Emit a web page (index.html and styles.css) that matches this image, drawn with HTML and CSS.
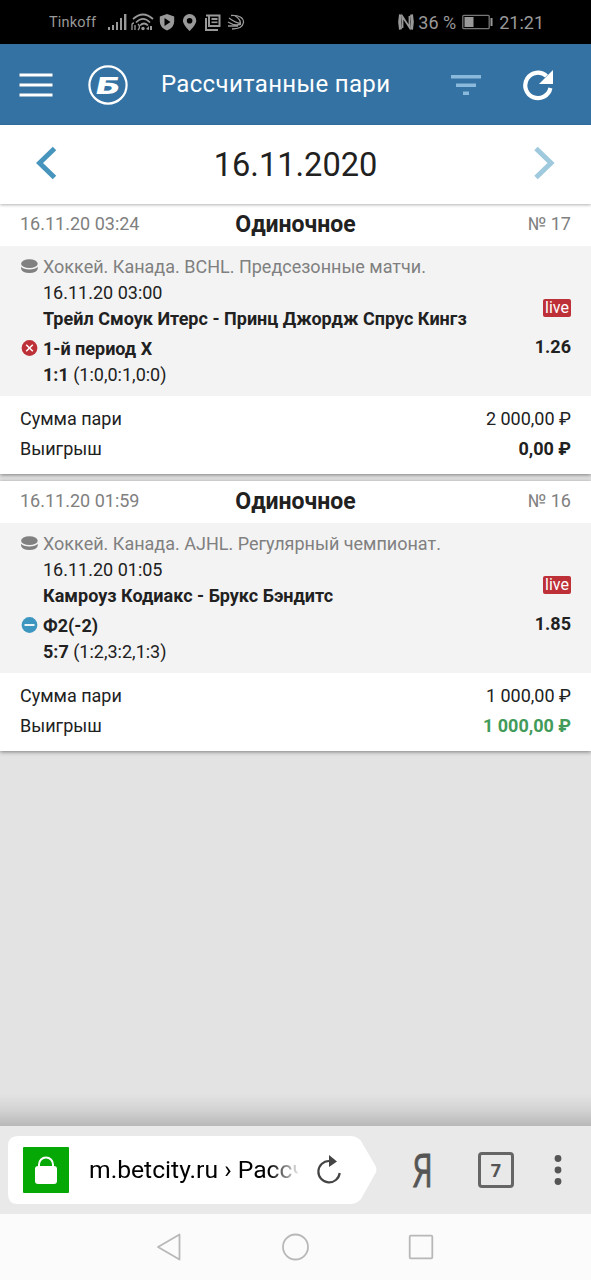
FILE: index.html
```html
<!DOCTYPE html>
<html lang="ru">
<head>
<meta charset="utf-8">
<title>Рассчитанные пари</title>
<link rel="stylesheet" href="styles.css">
</head>
<body>
<div class="screen">
  <div class="status">
    <span class="carrier">Tinkoff</span>
    <svg class="status-icons" width="140" height="22" viewBox="0 0 140 22" fill="#999">
      <path d="M0 16h2v3H0zM4 14h2v5H4zM8 11h2v8H8zM12 7h2v12h-2zM16 3h2.400v16H16z"/>
      <g fill="none" stroke="#999" stroke-width="1.700">
        <path d="M25 8Q35 -1 45 8M28 11.500Q35 4.500 42 11.500M32 14.500Q36 10.500 40 14.500"/>
        <path d="M24 19v-5q0-2 2-2M27 14v5M30 13q3 3 0 6" stroke-width="1.300"/>
      </g>
      <circle cx="35" cy="17.500" r="1.700"/><path d="M38 18l3-3v4zM42 15h2v4h-2z"/>
      <path fill-rule="evenodd" d="M59 3l7.200 2.500v5q0 6-7.200 9-7.200-3-7.200-9v-5zM56.500 7v8l6-4z"/>
      <path fill-rule="evenodd" d="M81.600 3a6.700 6.700 0 0 1 6.700 6.700c0 4-6.700 10.300-6.700 10.300s-6.700-6.300-6.700-10.300A6.700 6.700 0 0 1 81.600 3zm0 4a2.800 2.800 0 1 0 0 5.600 2.800 2.800 0 0 0 0-5.600z"/>
      <g fill="none" stroke="#999" stroke-width="2">
        <path d="M98 7v12h12M98 4.500h13.500v10.500H101V4.500M103.500 8h6" />
        <path d="M103.500 11.300h6" stroke-width="1.600"/>
      </g>
      <g fill="none" stroke="#999" stroke-width="1.300">
        <path d="M123 4.500Q135.500 4 135.500 11.500 134.500 18 124 18M127 5q6 3 5.500 9M121 7q7 5 11 5.500M120 11q6 4 12 2.500M120 15h10"/>
      </g>
    </svg>
    <div class="status-right">
      <svg width="18" height="18" viewBox="0 0 18 18"><path d="M3.500 1.500Q1.800 9 3.500 16.500M14.500 1.500Q16.200 9 14.500 16.500" fill="none" stroke="#999" stroke-width="3"/><path d="M5.500 15V3.500L12.500 14.500V3" fill="none" stroke="#999" stroke-width="1.800"/></svg>
      <span class="percent">36 %</span>
      <svg class="battery" width="32" height="16" viewBox="0 0 32 16"><rect x="1.800" y="1.300" width="26.400" height="13.400" rx="1" fill="none" stroke="#777" stroke-width="1.300"/><path d="M3.500 3h9v10h-9zM29.500 4h2v8h-2z" fill="#999"/></svg>
      <span class="clock">21:21</span>
    </div>
  </div>

  <div class="appbar">
    <svg class="menu" width="34" height="26" viewBox="0 0 34 26"><path d="M.5 3h33M.5 13h33M.5 23h33" stroke="#fff" stroke-width="3"/></svg>
    <svg class="logo" width="40" height="40" viewBox="0 0 40 40"><circle cx="20" cy="20" r="18.600" fill="none" stroke="#fff" stroke-width="2.200"/><text class="logo-letter" transform="translate(6.500 28.600) skewX(-12) scale(1.560 1)" fill="#fff">Б</text></svg>
    <h1 class="title">Рассчитанные пари</h1>
    <svg class="filter" width="30" height="22" viewBox="0 0 30 22" fill="#8ab9dc"><path d="M0 1h30v3.500H0zM5 9.500h20V13H5zM12 17.500h6V21h-6z"/></svg>
    <svg class="refresh" width="32" height="32" viewBox="0 0 32 32"><path d="M24.500 7A12.700 12.700 0 1 0 28.400 19" fill="none" stroke="#fff" stroke-width="4.200"/><path d="M31 1v14H17z" fill="#fff"/></svg>
  </div>

  <div class="datebar">
    <svg width="22" height="34" viewBox="0 0 22 34"><path d="M18.500 2.500L3.500 17l15 14.500" fill="none" stroke="#4795bc" stroke-width="5"/></svg>
    <span class="date">16.11.2020</span>
    <svg width="22" height="34" viewBox="0 0 22 34"><path d="M3 2.500L18 17 3 31.500" fill="none" stroke="#9fc9dd" stroke-width="5"/></svg>
  </div>

  <div class="bets">
    <section class="card">
      <div class="card-head"><span>16.11.20 03:24</span><b class="kind">Одиночное</b><span class="number">№ 17</span></div>
      <div class="event">
        <div class="row muted"><svg class="mark" width="18" height="18" viewBox="0 0 18 18" fill="#808080"><ellipse cx="9.400" cy="6.700" rx="8.300" ry="4.400"/><path d="M1.100 9.800Q3.400 12.400 9.400 12.400T17.700 9.800v2.200Q16.400 16 9.400 16T1.100 12z"/></svg><span class="league">Хоккей. Канада. BCHL. Предсезонные матчи.</span></div>
        <div class="row indent">16.11.20 03:00</div>
        <div class="row indent teams"><b>Трейл Смоук Итерс - Принц Джордж Спрус Кингз</b><span class="live">live</span></div>
        <div class="row outcome"><svg class="mark" width="18" height="18" viewBox="0 0 18 18"><circle cx="9.500" cy="9" r="7.900" fill="#be3038"/><path d="M6.200 5.700l6.600 6.600M12.800 5.700l-6.600 6.600" stroke="#fff" stroke-width="1.500"/></svg><b>1-й период X</b><b class="odds">1.26</b></div>
        <div class="row indent score"><b>1:1</b> (1:0,0:1,0:0)</div>
      </div>
      <div class="sums">
        <div class="sum"><span>Сумма пари</span><span class="money">2 000,00 ₽</span></div>
        <div class="sum"><span>Выигрыш</span><b class="money">0,00 ₽</b></div>
      </div>
    </section>
    <section class="card">
      <div class="card-head"><span>16.11.20 01:59</span><b class="kind">Одиночное</b><span class="number">№ 16</span></div>
      <div class="event">
        <div class="row muted"><svg class="mark" width="18" height="18" viewBox="0 0 18 18" fill="#808080"><ellipse cx="9.400" cy="6.700" rx="8.300" ry="4.400"/><path d="M1.100 9.800Q3.400 12.400 9.400 12.400T17.700 9.800v2.200Q16.400 16 9.400 16T1.100 12z"/></svg><span class="league">Хоккей. Канада. AJHL. Регулярный чемпионат.</span></div>
        <div class="row indent">16.11.20 01:05</div>
        <div class="row indent teams"><b>Камроуз Кодиакс - Брукс Бэндитс</b><span class="live">live</span></div>
        <div class="row outcome"><svg class="mark" width="18" height="18" viewBox="0 0 18 18"><circle cx="9.500" cy="9" r="7.900" fill="#3d96c0"/><path d="M4.500 9h10" stroke="#fff" stroke-width="1.800"/></svg><b>Ф2(-2)</b><b class="odds">1.85</b></div>
        <div class="row indent score"><b>5:7</b> (1:2,3:2,1:3)</div>
      </div>
      <div class="sums">
        <div class="sum"><span>Сумма пари</span><span class="money">1 000,00 ₽</span></div>
        <div class="sum"><span>Выигрыш</span><b class="money win">1 000,00 ₽</b></div>
      </div>
    </section>
  </div>

  <div class="shade"></div>
  <div class="browser">
    <div class="address">
      <svg class="address-shape" width="371" height="72" viewBox="0 0 371 72"><path d="M10 2H342Q349 2 353 7L367 31Q370 35.500 367 40L353 65Q349 70 342 70H10Q0 70 0 60V12Q0 2 10 2Z" fill="#fff"/></svg>
      <span class="lock"><svg width="22" height="28" viewBox="0 0 22 28"><rect y="10" width="22" height="18" rx="3" fill="#fff"/><path d="M4 11V8.500a7 7 0 0 1 14 0V11" fill="none" stroke="#fff" stroke-width="2"/></svg></span>
      <span class="url">m.betcity.ru › Рассч</span>
      <svg class="reload" width="24" height="30" viewBox="0 0 24 30"><path d="M12 6A10.700 10.700 0 1 0 22.700 18" fill="none" stroke="#444" stroke-width="2.200"/><path d="M12 0l8 6.500-8 5.500z" fill="#444"/></svg>
    </div>
    <svg class="yandex" width="24" height="64" viewBox="0 0 24 64"><text class="yandex-letter" transform="translate(.5 48.500) scale(.72 1)" fill="#555" stroke="#555" stroke-width=".8">Я</text></svg>
    <span class="tabs">7</span>
    <svg class="more" width="8" height="32" viewBox="0 0 8 32" fill="#555"><circle cx="4" cy="4.500" r="3.400"/><circle cx="4" cy="16" r="3.400"/><circle cx="4" cy="27.500" r="3.400"/></svg>
  </div>
  <div class="navbar">
    <svg width="26" height="28" viewBox="0 0 26 28"><path d="M23.500 1.500v25L2 14z" fill="none" stroke="#b8b8b8" stroke-width="1.800" stroke-linejoin="round"/></svg>
    <svg width="28" height="28" viewBox="0 0 28 28"><circle cx="14.500" cy="14" r="12.500" fill="none" stroke="#b8b8b8" stroke-width="1.800"/></svg>
    <svg width="26" height="26" viewBox="0 0 26 26"><rect x="1.700" y="1.700" width="22.600" height="22.600" rx="1" fill="none" stroke="#b8b8b8" stroke-width="1.800"/></svg>
  </div>
</div>
</body>
</html>
```

FILE: styles.css
```css
* { box-sizing: border-box; }
body {
  margin: 0;
  font-family: Roboto, "Noto Sans", sans-serif;
  font-size: 18px;
  color: #212121;
  background: #e3e3e3;
}
svg { display: block; flex: none; }
.screen {
  display: flex;
  flex-direction: column;
  width: 591px;
  height: 1280px;
  overflow: hidden;
}
.status {
  display: flex;
  align-items: center;
  flex: none;
  height: 44px;
  padding: 0 47px 0 49px;
  background: #000;
  color: #999;
}
.carrier { width: 59px; font-size: 14.5px; letter-spacing: .2px; }
.status-right { display: flex; align-items: center; margin-left: auto; }
.percent { margin-left: 3px; font-size: 18px; }
.battery { margin: 0 6px 0 5px; }
.clock { font-size: 18px; }
.appbar {
  display: flex;
  align-items: center;
  flex: none;
  height: 81px;
  padding: 1px 37px 0 19px;
  background: #3472a3;
}
.logo { margin-left: 35px; }
.logo-letter { font: 900 24px Roboto, sans-serif; }
.title {
  margin: 0 auto 3px 33px;
  font-size: 24px;
  font-weight: 400;
  letter-spacing: .33px;
  color: #fff;
  white-space: nowrap;
}
.refresh { margin-left: 41px; }
.datebar {
  position: relative;
  z-index: 1;
  display: flex;
  align-items: center;
  justify-content: space-between;
  flex: none;
  height: 79px;
  padding: 0 36px 4px;
  background: #fff;
  box-shadow: 0 1px 3px rgba(0, 0, 0, .3);
}
.date { font-size: 32.6px; line-height: 38px; padding-top: 5px; }
.bets { display: flex; flex-direction: column; gap: 7px; flex: 1; }
.card {
  height: 270px;
  background: #fff;
  box-shadow: 0 1px 4px rgba(0, 0, 0, .45);
}
.card-head {
  display: grid;
  grid-template-columns: 1fr auto 1fr;
  align-items: center;
  height: 42px;
  padding: 0 20px 4px;
  color: #808080;
}
.kind { padding-top: 2px; font-size: 23px; line-height: 27px; color: #212121; }
.number { text-align: right; }
.event {
  height: 150px;
  padding: 7px 20px 0;
  background: #f3f3f3;
}
.row { display: flex; align-items: center; height: 26px; white-space: pre; }
.mark { width: 18px; margin-right: 5px; }
.muted { color: #808080; }
.indent { padding-left: 23px; }
.teams { letter-spacing: .02px; }
.outcome { margin-top: 4px; }
.odds { margin: 0 0 3px auto; }
.live {
  align-self: flex-start;
  margin: -6px 0 0 auto;
  padding: 0 2px;
  border-radius: 2px;
  background: #be3038;
  color: #fff;
  font-size: 16px;
  line-height: 18px;
}
.sums { padding: 8px 20px 0; }
.sum {
  display: flex;
  align-items: center;
  justify-content: space-between;
  height: 29.5px;
}
.win { color: #429b5a; }
.shade {
  flex: none;
  height: 32px;
  background: linear-gradient(#e3e3e3, #d3d3d3 50%, #b8b8b8);
}
.browser {
  display: flex;
  align-items: center;
  flex: none;
  height: 88px;
  padding: 0 29px 0 8px;
  background: #e9e9e9;
}
.address {
  position: relative;
  display: flex;
  align-items: center;
  width: 371px;
  height: 72px;
  padding-left: 15px;
}
.address-shape { position: absolute; left: 0; top: 0; }
.lock {
  position: relative;
  display: grid;
  place-items: center;
  width: 46px;
  height: 46px;
  border-radius: 1px;
  background: #06a806;
}
.url {
  position: relative;
  width: 209px;
  margin: 0 0 1px 20px;
  overflow: hidden;
  white-space: nowrap;
  font-size: 24.7px;
  color: #000;
  -webkit-mask-image: linear-gradient(90deg, #000 180px, transparent 212px);
  mask-image: linear-gradient(90deg, #000 180px, transparent 212px);
}
.reload { position: relative; margin-left: 19px; }
.yandex { margin-left: 33px; }
.yandex-letter { font: 400 45px "Open Sans", sans-serif; }
.tabs {
  display: grid;
  place-items: center;
  width: 36px;
  height: 36px;
  margin: 0 auto 0 42px;
  border: 3px solid #666;
  border-radius: 4px;
  color: #555;
  font: 700 18px "Open Sans", sans-serif;
}
.navbar {
  display: flex;
  align-items: center;
  justify-content: space-between;
  flex: none;
  height: 66px;
  padding: 0 157px 0 156px;
  background: #fbfbfb;
}
```
